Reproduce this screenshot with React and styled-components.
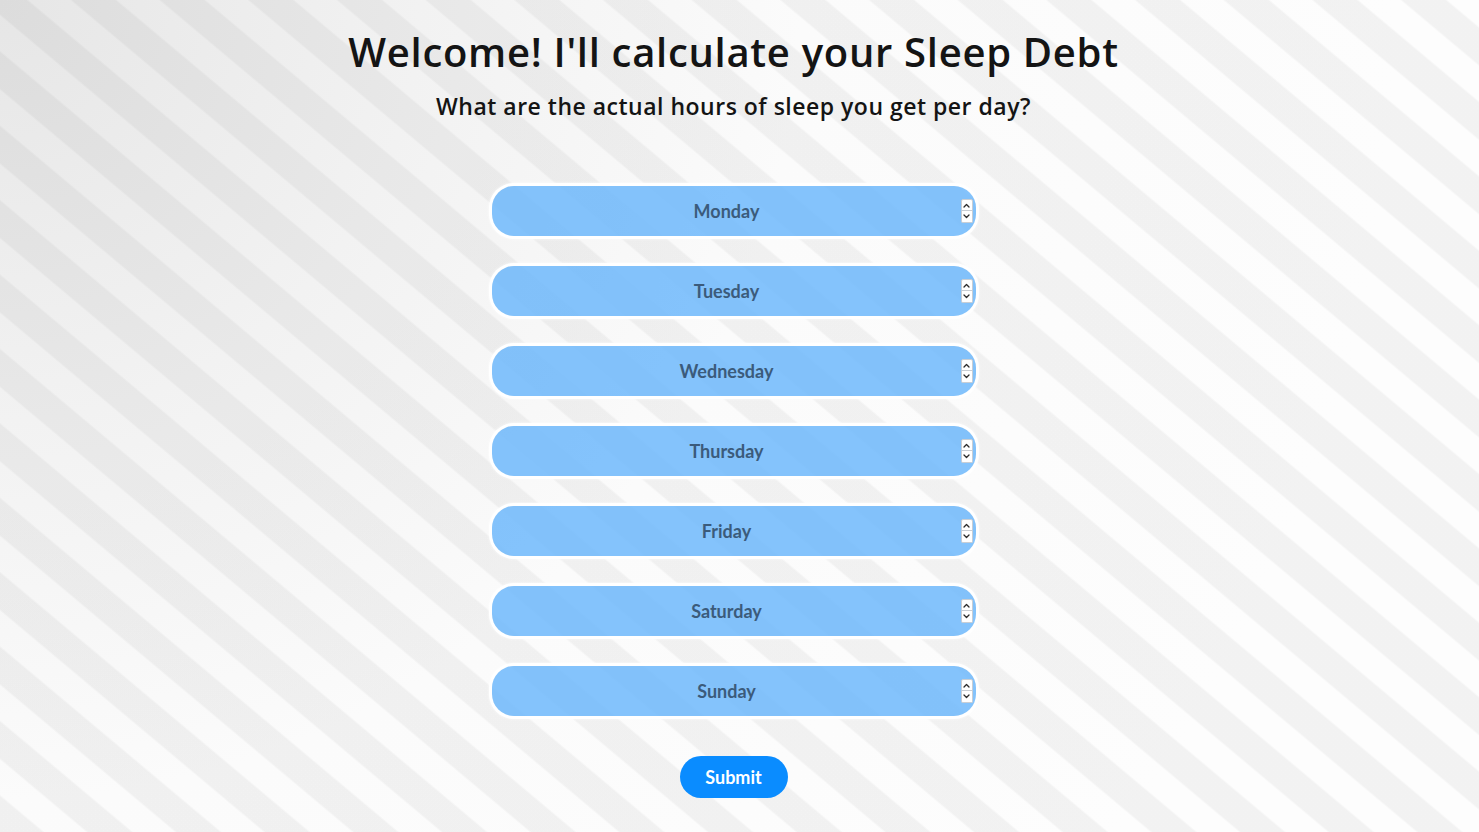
import React from 'react'
import styled, { createGlobalStyle } from 'styled-components'

const GlobalStyle = createGlobalStyle`
    html, body {
        margin: 0;
        padding: 0;
    }
    body {
        font-family: "Open Sans", "Liberation Sans", sans-serif;
        background-color: #f8f8f8;
    }
`;

const Page = styled.div`
    min-height: 100vh;
    box-sizing: border-box;
    padding: 26px 12px 0 0;
    display: flex;
    flex-direction: column;
    align-items: center;
    background:
        repeating-linear-gradient(
            40deg,
            rgba(0,0,0,0.045) 0px,
            rgba(0,0,0,0.045) 27px,
            rgba(0,0,0,0) 29px,
            rgba(0,0,0,0) 55px,
            rgba(0,0,0,0.045) 57px
        ),
        radial-gradient(circle at 0 0, #e6e6e6 0px, #f2f2f2 420px, #fbfbfb 800px, #fdfdfd 1400px);
`;

const Title = styled.h1`
    margin: 0;
    font-family: "Open Sans", sans-serif;
    font-weight: 600;
    font-size: 40px;
    letter-spacing: 0.7px;
    color: #141414;
    line-height: 52px;
`;

const Subtitle = styled.h2`
    margin: 2px 0 0 0;
    font-family: "Open Sans", sans-serif;
    font-weight: 600;
    font-size: 23px;
    letter-spacing: 0.5px;
    color: #141414;
    line-height: 52px;
`;

const Form = styled.form`
    margin-top: 54px;
    display: flex;
    flex-direction: column;
    align-items: center;
    gap: 30px;
`;

const Field = styled.label`
    box-sizing: border-box;
    width: 484px;
    height: 50px;
    padding: 0 3px 0 2px;
    display: flex;
    align-items: center;
    border-radius: 22px;
    background-color: rgba(110, 185, 251, 0.85);
    box-shadow: 0 0 0 3px #ffffff, 0 0 3px 3px rgba(255,255,255,0.8);
`;

const DayInput = styled.input`
    flex: 1;
    min-width: 0;
    height: 100%;
    padding: 0;
    border: none;
    outline: none;
    background: transparent;
    font-family: Lato, "Open Sans", sans-serif;
    font-weight: 700;
    font-size: 18px;
    color: #3b5b7b;
    text-align: center;
    -moz-appearance: textfield;

    &::placeholder {
        color: #3b5b7b;
        opacity: 1;
    }

    &::-webkit-inner-spin-button,
    &::-webkit-outer-spin-button {
        -webkit-appearance: none;
        margin: 0;
    }
`;

const Spinner = styled.div`
    display: flex;
    flex-direction: column;
    margin-left: 1px;
`;

const SpinButton = styled.button`
    box-sizing: border-box;
    width: 12px;
    height: 12px;
    padding: 0;
    display: flex;
    align-items: center;
    justify-content: center;
    background: #ffffff;
    border: 1px solid #c9ced4;
    border-radius: ${p => (p.$up ? '2px 2px 0 0' : '0 0 2px 2px')};
    border-top-width: ${p => (p.$up ? '1px' : '0')};
    cursor: pointer;

    & svg {
        width: 7px;
        height: 5px;
    }
`;

const SubmitButton = styled.button`
    margin-top: 10px;
    width: 108px;
    height: 42px;
    border: none;
    border-radius: 21px;
    background-color: #0a8cff;
    color: #ffffff;
    font-family: Lato, "Open Sans", sans-serif;
    font-weight: 700;
    font-size: 18px;
    cursor: pointer;
`;

const Chevron = ({ up }) => (
    <svg viewBox="0 0 7 5" fill="none">
        <path
            d={up ? 'M1 4 L3.5 1.5 L6 4' : 'M1 1 L3.5 3.5 L6 1'}
            stroke="#2b2b2b"
            strokeWidth="1.3"
            strokeLinecap="round"
            strokeLinejoin="round"
        />
    </svg>
);

const days = ['Monday', 'Tuesday', 'Wednesday', 'Thursday', 'Friday', 'Saturday', 'Sunday'];

function DayField({ day }) {
    return (
        <Field>
            <DayInput type="number" placeholder={day} name={day.toLowerCase()} />
            <Spinner>
                <SpinButton type="button" $up tabIndex={-1}>
                    <Chevron up />
                </SpinButton>
                <SpinButton type="button" tabIndex={-1}>
                    <Chevron />
                </SpinButton>
            </Spinner>
        </Field>
    )
}

export default function App() {
    return (
        <>
            <GlobalStyle />
            <Page>
                <Title>Welcome! I'll calculate your Sleep Debt</Title>
                <Subtitle>What are the actual hours of sleep you get per day?</Subtitle>
                <Form onSubmit={e => e.preventDefault()}>
                    {days.map(day => (
                        <DayField key={day} day={day} />
                    ))}
                    <SubmitButton type="submit">Submit</SubmitButton>
                </Form>
            </Page>
        </>
    )
}
